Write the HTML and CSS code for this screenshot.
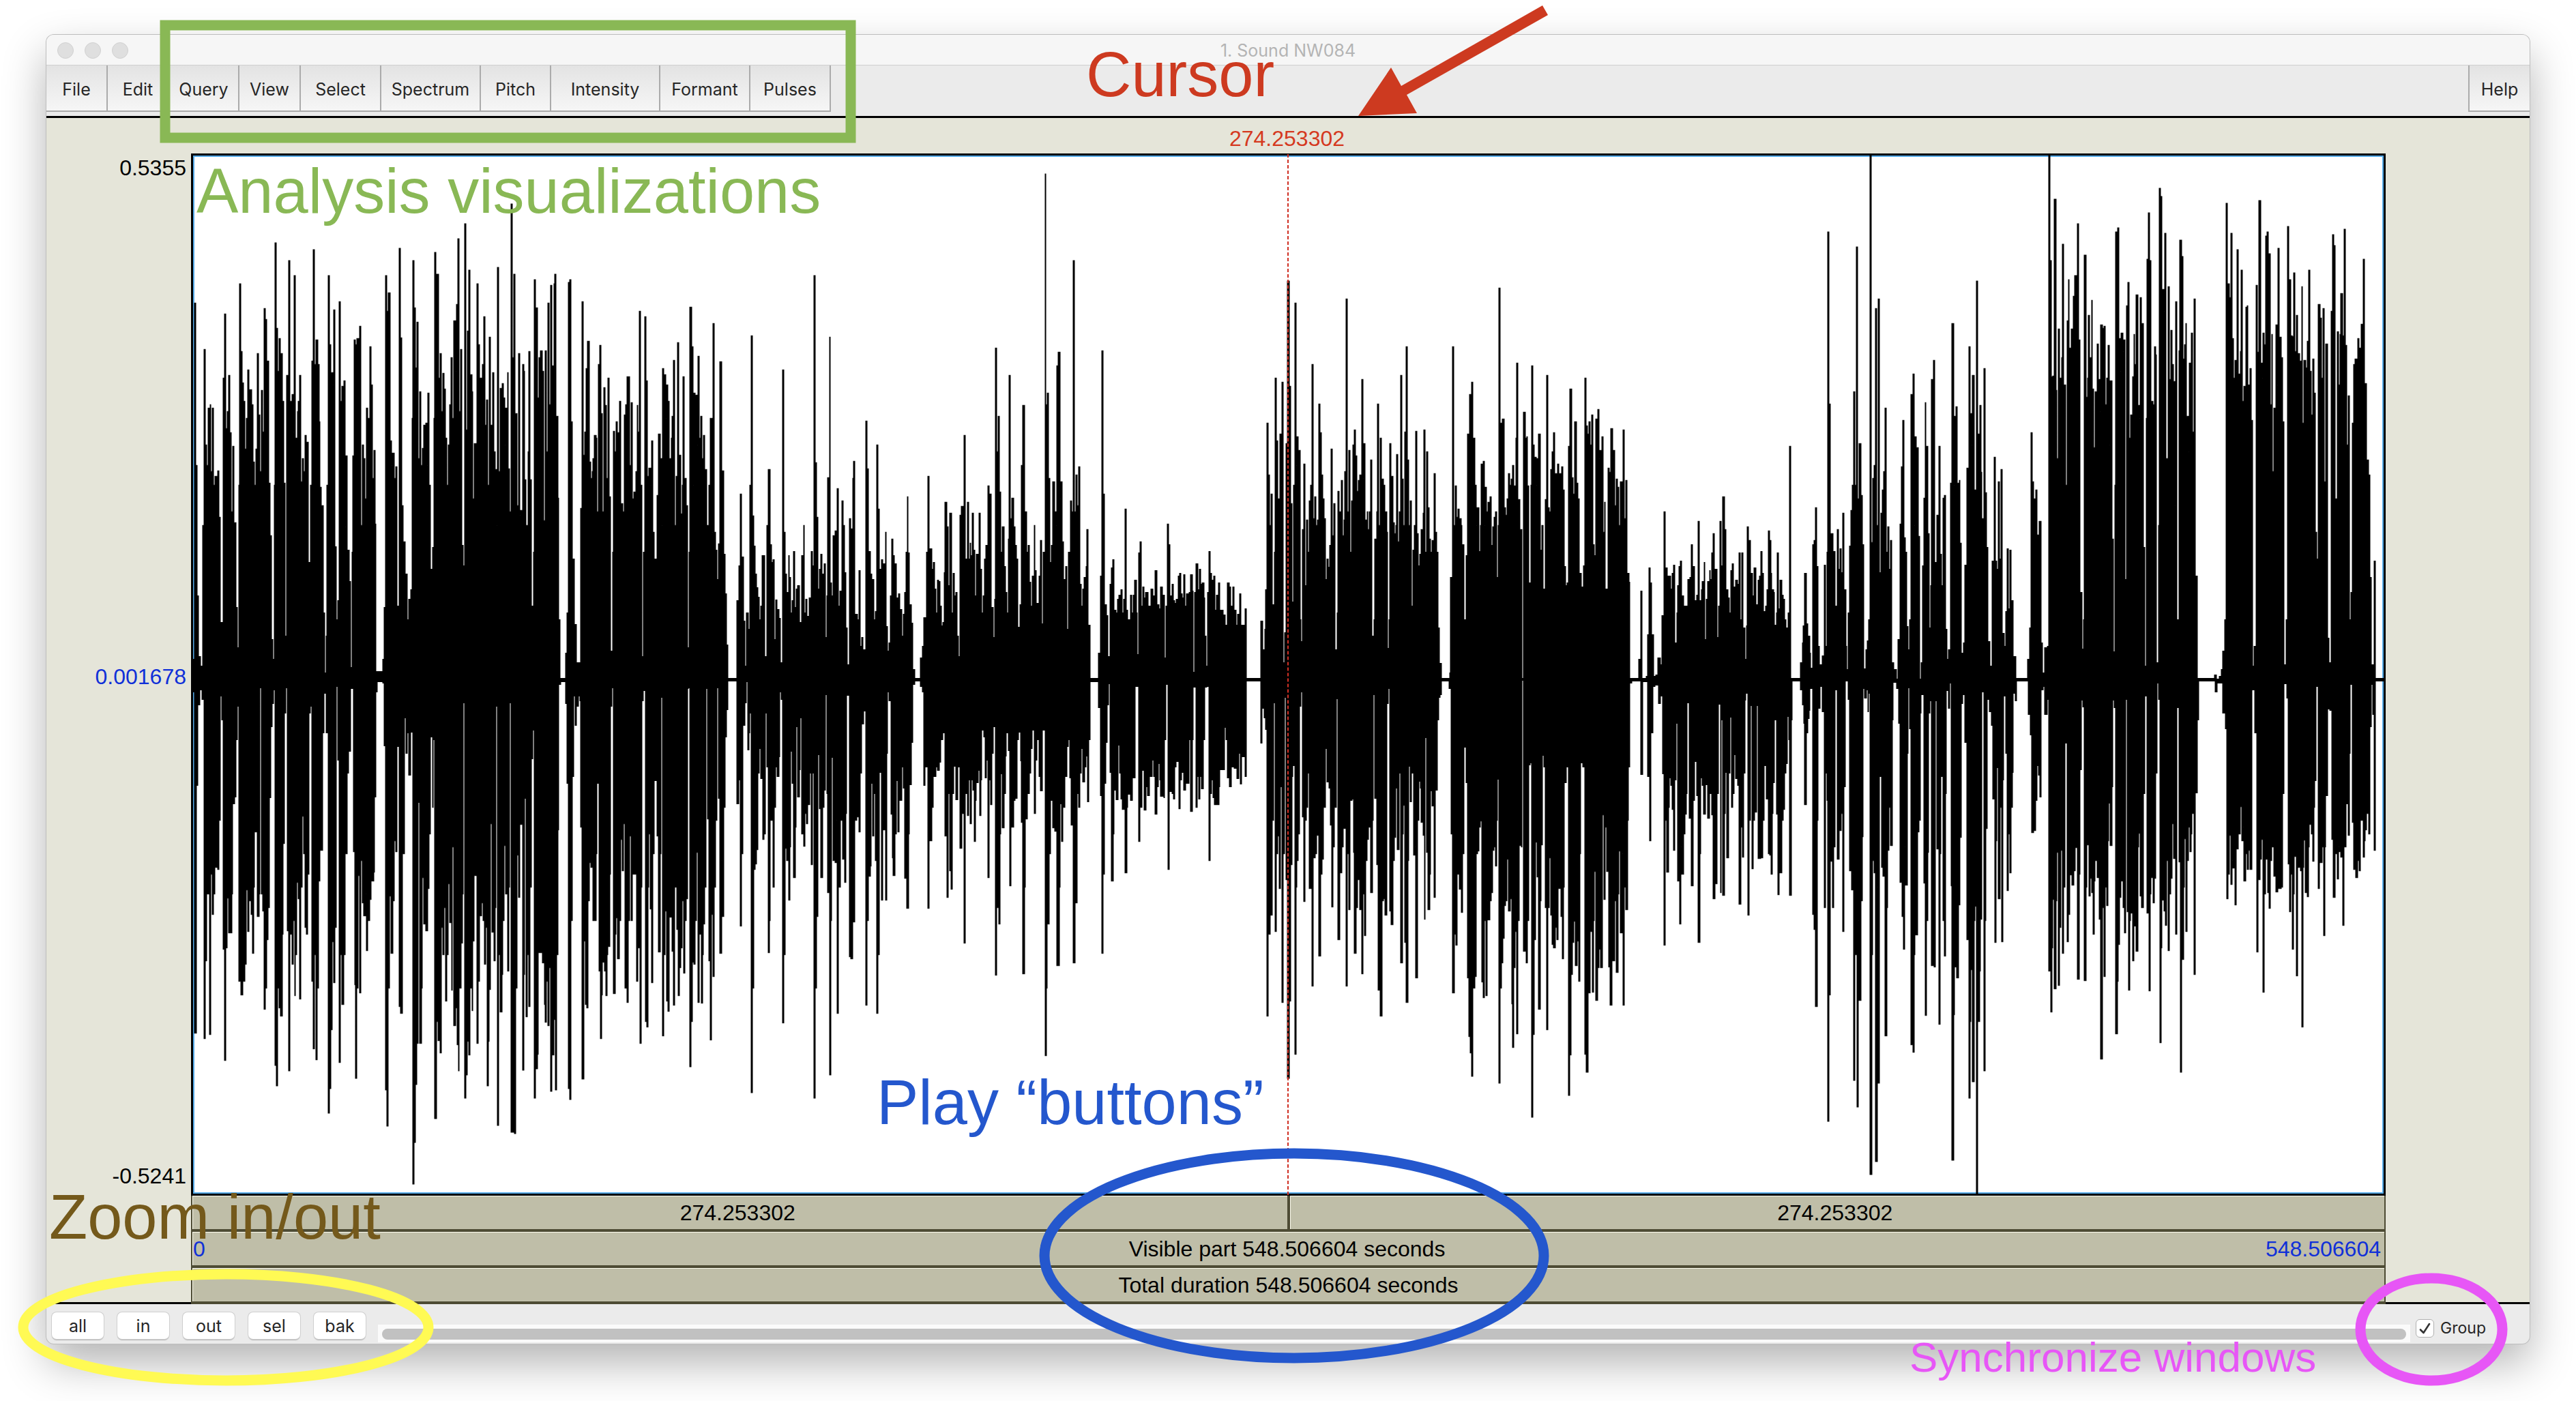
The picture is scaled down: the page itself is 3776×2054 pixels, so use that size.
FILE: index.html
```html
<!DOCTYPE html>
<html lang="en">
<head>
<meta charset="utf-8">
<title>1. Sound NW084</title>
<link rel="stylesheet" href="styles.css">
</head>
<body>
<main class="window">
  <header class="titlebar">
    <div class="lights"><i class="light"></i><i class="light"></i><i class="light"></i></div>
    <h1 class="title">1. Sound NW084</h1>
  </header>
  <nav class="menubar">
    <button class="menu w-s">File</button>
    <button class="menu w-s">Edit</button>
    <button class="menu w-m">Query</button>
    <button class="menu w-s">View</button>
    <button class="menu w-l">Select</button>
    <button class="menu w-xxl">Spectrum</button>
    <button class="menu w-m">Pitch</button>
    <button class="menu w-max">Intensity</button>
    <button class="menu w-xl">Formant</button>
    <button class="menu w-l">Pulses</button>
    <button class="menu menu-help">Help</button>
  </nav>
  <section class="editor">
    <div class="scale">
      <span>0.5355</span>
      <span class="blue scale-mid">0.001678</span>
      <span class="scale-low">-0.5241</span>
    </div>
    <div class="cursor-time">274.253302</div>
    <div class="plot">
      <svg class="wave" viewBox="280 225 3217 1527" preserveAspectRatio="none" aria-label="Waveform">
        <g id="wave" class="peaks"></g>
        <path class="cursor-line" d="M1888 226V1751"/>
      </svg>
    </div>
    <div class="bars">
      <div class="bar-row">
        <button class="bar bar-half">274.253302</button>
        <button class="bar bar-half">274.253302</button>
      </div>
      <button class="bar bar-ends"><span class="blue">0</span><span>Visible part 548.506604 seconds</span><span class="blue end">548.506604</span></button>
      <button class="bar">Total duration 548.506604 seconds</button>
    </div>
    <div class="margin"></div>
  </section>
  <footer class="footer">
    <div class="zooms">
      <button class="zoom">all</button>
      <button class="zoom">in</button>
      <button class="zoom">out</button>
      <button class="zoom">sel</button>
      <button class="zoom">bak</button>
    </div>
    <div class="track"><div class="thumb"></div></div>
    <label class="group"><input class="check" type="checkbox" checked>Group</label>
  </footer>
</main>
<div class="notes">
  <svg class="shapes" viewBox="0 0 3776 2054" preserveAspectRatio="none" aria-hidden="true">
    <rect class="ring green" x="242" y="37" width="1005" height="165"/>
    <ellipse class="ring royal" cx="1897" cy="1841" rx="366" ry="150"/>
    <ellipse class="ring yellow" cx="331" cy="1946" rx="297" ry="78"/>
    <ellipse class="ring pink" cx="3564" cy="1949" rx="104" ry="75"/>
    <path class="arrow" d="M1991 170L2039 99L2054 126L2261 8L2269 22L2062 139L2077 166Z"/>
  </svg>
  <p class="note note-analysis">Analysis visualizations</p>
  <p class="note note-cursor">Cursor</p>
  <p class="note note-play">Play “buttons”</p>
  <p class="note note-zoom">Zoom in/out</p>
  <p class="note note-sync">Synchronize windows</p>
</div>
<script src="wave.js"></script>
</body>
</html>
```
FILE: styles.css
```css
* { box-sizing: border-box; }
body {
  margin: 0;
  min-height: 100vh;
  padding: 51px 68px 84px;
  display: flex;
  position: relative;
  background: #fff;
  color: #000;
  font-family: "Liberation Sans", Arial, sans-serif;
  overflow-x: hidden;
}
button { font: inherit; color: inherit; margin: 0; }
.window {
  flex: 1;
  display: flex;
  flex-direction: column;
  border-radius: 11px;
  overflow: hidden;
  background: #ebebeb;
  box-shadow: 0 0 0 1px #bdbdbd, 0 28px 64px rgba(0, 0, 0, .3);
}
.titlebar {
  height: 45px;
  display: grid;
  grid-template-columns: 1fr auto 1fr;
  align-items: center;
  padding-top: 2px;
  background: #f6f6f6;
  border-bottom: 1px solid #cfcfcf;
}
.lights { display: flex; gap: 16px; padding-left: 16px; }
.light { width: 24px; height: 24px; border-radius: 50%; background: #dfdfdf; border: 1px solid #d0d0d0; }
.title { margin: 0; font: 400 25px/32px Inter, sans-serif; color: #b4b4b4; }
.menubar { height: 74px; display: flex; align-items: flex-start; font: 25px Inter, sans-serif; color: #262626; }
.menu {
  height: 68px;
  padding: 4px 0 0;
  border: 0 solid #ababab;
  border-width: 0 2px 2px 0;
  background: linear-gradient(#e3e3e3, #f6f6f6);
}
.w-s { width: 90px; }
.w-m { width: 103px; }
.w-l { width: 118px; }
.w-xl { width: 132px; }
.w-xxl { width: 146px; }
.w-max { width: 160px; }
.menu-help { width: 90px; margin-left: auto; border-width: 0 0 2px 2px; }
.editor {
  flex: 1;
  display: grid;
  grid-template-columns: 212px 1fr 211px;
  grid-template-rows: 52px 1fr auto;
  border-top: 3px solid #000;
  background: #e5e5d9;
  font-size: 32px;
  line-height: 36px;
}
.scale {
  grid-column: 1;
  grid-row: 1 / 4;
  display: grid;
  grid-template-rows: auto 51fr auto 50fr auto;
  justify-items: end;
  padding: 55px 7px 167px 0;
  border-bottom: 3px solid #000;
}
.scale-mid { grid-row: 3; }
.scale-low { grid-row: 5; }
.blue { color: #1030d8; }
.cursor-time { grid-column: 2; grid-row: 1; padding: 12px 4px 0 0; text-align: center; color: #d5391f; }
.plot { grid-column: 2; grid-row: 2; position: relative; background: #fff; border: 3px solid #000; box-shadow: inset 0 0 0 2px #55aae8; }
.wave { position: absolute; left: -3px; top: -3px; width: calc(100% + 6px); height: calc(100% + 6px); }
.peaks { fill: #000; stroke: #000; stroke-width: 1; }
.cursor-line { stroke: #d03024; stroke-width: 2; stroke-dasharray: 5 3; fill: none; }
.bars { grid-column: 2; grid-row: 3; }
.bar-row { display: grid; grid-template-columns: 1fr 1fr; }
.bar {
  display: block;
  width: 100%;
  height: 53px;
  padding: 0;
  border: 0 solid #4d4b34;
  border-width: 0 2px 4px;
  background: #bfbea8;
  box-shadow: inset 1px 1px #fffff0;
}
.bar-half { padding-right: 6px; }
.bar-ends { display: grid; grid-template-columns: 1fr auto 1fr; align-items: center; text-align: left; padding: 0 5px 0 1px; }
.end { text-align: right; }
.margin { grid-column: 3; grid-row: 1 / 4; border-bottom: 3px solid #000; }
.footer { height: 58px; display: flex; align-items: flex-start; font: 25px Inter, sans-serif; color: #262626; }
.zooms { display: flex; gap: 20px; padding: 12px 0 0 8px; }
.zoom {
  width: 76px;
  height: 39px;
  padding: 0;
  border: 0;
  border-radius: 7px;
  background: #fff;
  box-shadow: 0 0 0 1px #cfcfcf, 0 2px 1px #b4b4b4;
}
.track { flex: 1; height: 26px; margin: 30px 8px 0 18px; padding: 6px; background: #fafafa; }
.thumb { height: 16px; border-radius: 8px; background: #c1c1c1; }
.group { display: flex; align-items: center; gap: 9px; margin-top: 20px; padding-right: 64px; font-size: 23px; line-height: 30px; }
.check {
  appearance: none;
  width: 27px;
  height: 27px;
  margin: 0;
  border: 1px solid #b0b0b0;
  border-radius: 6px;
  background: #fff url("data:image/svg+xml,%3Csvg xmlns='http://www.w3.org/2000/svg' viewBox='0 0 25 25'%3E%3Cpath d='M6 14.500L10.500 19L19 6' fill='none' stroke='%23333' stroke-width='2.600' stroke-linecap='round' stroke-linejoin='round'/%3E%3C/svg%3E");
}
.notes { position: absolute; inset: 0; pointer-events: none; overflow: hidden; }
.shapes { position: absolute; left: 0; top: 0; width: 100%; height: 100%; }
.ring { fill: none; stroke-width: 15; }
.green { stroke: #89b855; }
.royal { stroke: #2457cd; }
.yellow { stroke: #fffa54; }
.pink { stroke: #e756f6; }
.arrow { fill: #cd3a20; }
.note { position: absolute; margin: 0; font-size: 92px; line-height: 104px; white-space: nowrap; }
.note-analysis { left: 288px; top: 228px; color: #89b855; }
.note-cursor { left: 1592px; top: 57px; color: #cd3a20; }
.note-play { left: 1285px; top: 1564px; color: #2457cd; }
.note-zoom { left: 72px; top: 1732px; color: #74591b; }
.note-sync { left: 2799px; top: 1955px; font-size: 62px; line-height: 70px; color: #e756f6; }
```
FILE: wave.js
```js
// Peak envelopes, stored in four blocks. Each list holds "x y" pairs: from x onward the
// envelope stays at y until the next pair. One unit is 15/28 px across and 55/56 px down.
const ZERO = 790;
const blocks = [
  {
    left: 270, end: 1512,
    up: `16 770 23 760 28 228 31 470 35 665 39 755 44 770 50 560 54 297 58 440 62 470 65 385 70 380 73 480 77 385 80 500 84 487 91 479 95 548 99 705 106 340 110 244 114 415 117 390 121 336 125 422 129 540 133 442 137 556 141 682 146 742 149 500 151 200 155 300 159 347 163 375 166 446 170 400 174 328 178 357 185 380 189 465 193 500 196 446 200 303 203 395 207 480 211 358 215 420 218 236 222 253 226 315 231 497 235 575 239 730 243 760 246 500 248 138 252 266 256 330 260 281 264 303 268 375 272 497 276 725 280 336 286 165 290 375 294 365 298 420 301 187 305 430 309 390 312 375 316 336 319 495 323 460 327 480 331 426 335 436 339 615 343 732 346 500 349 315 353 149 357 320 361 283 365 320 369 405 372 503 376 530 380 690 384 780 389 725 391 500 394 187 398 290 402 332 406 350 409 238 413 592 417 700 420 672 424 226 427 375 431 352 436 344 440 562 443 456 447 597 451 643 455 772 459 600 461 456 465 283 469 290 473 281 477 370 480 263 484 560 487 440 491 460 495 520 499 385 503 400 507 293 511 350 515 490 518 448 522 558 525 778 543 760 546 682 551 187 555 240 559 213 563 434 567 470 570 452 574 490 578 472 582 680 588 147 592 280 596 530 600 584 604 670 607 632 611 700 614 670 619 656 623 400 625 165 629 235 633 325 637 257 641 460 644 360 648 470 652 445 656 410 660 407 664 470 667 362 670 500 674 625 679 593 683 400 685 153 689 185 696 340 700 303 704 390 707 333 711 356 715 430 719 500 723 440 726 380 730 310 734 400 738 255 742 330 745 230 749 132 753 390 756 297 760 590 763 620 767 110 771 417 775 270 779 179 783 335 787 360 790 520 794 438 798 640 801 200 805 290 809 340 815 320 820 248 823 410 827 373 831 500 835 279 839 410 843 332 847 450 851 477 855 560 857 175 861 480 865 355 869 348 873 370 877 440 880 385 884 332 887 475 891 540 894 80 898 310 902 185 906 393 910 530 914 303 918 545 921 538 925 320 929 330 932 492 936 560 940 450 943 300 947 492 951 680 955 600 958 193 962 235 966 370 970 310 974 299 980 330 984 553 988 299 991 450 995 228 999 380 1003 202 1007 322 1011 200 1014 185 1018 397 1022 519 1025 700 1028 788 1043 750 1047 690 1051 198 1055 193 1059 405 1063 610 1067 740 1070 708 1073 765 1082 765 1085 535 1088 226 1092 455 1096 420 1100 326 1104 285 1108 465 1112 490 1116 480 1119 460 1122 426 1127 430 1130 540 1133 320 1137 291 1141 393 1145 540 1148 354 1152 381 1156 490 1159 340 1163 517 1167 747 1172 600 1174 419 1178 450 1182 405 1186 422 1190 375 1194 527 1200 540 1204 395 1208 380 1212 338 1218 470 1223 377 1227 520 1230 510 1236 480 1239 381 1242 420 1245 240 1249 500 1253 755 1257 600 1260 248 1264 344 1268 487 1272 474 1276 500 1279 434 1283 570 1287 610 1291 670 1294 515 1298 424 1302 460 1306 560 1309 326 1313 335 1317 400 1320 350 1324 375 1328 460 1333 430 1335 397 1339 314 1343 560 1346 487 1350 287 1354 455 1358 543 1362 500 1365 338 1369 490 1373 530 1377 742 1381 600 1383 234 1388 293 1392 500 1395 362 1399 366 1403 440 1406 307 1410 430 1413 397 1417 460 1421 426 1425 477 1429 590 1432 560 1436 500 1440 400 1444 570 1447 259 1450 570 1454 597 1458 640 1462 587 1466 316 1470 620 1473 479 1477 603 1480 662 1484 738 1488 788`,
    down: `16 800 20 838 23 808 28 1318 33 948 38 828 43 805 48 820 52 810 54 1326 58 1210 62 1110 69 1320 73 1080 77 1140 80 1110 84 1070 89 820 92 1073 96 1000 99 815 103 850 107 1192 110 1358 114 1190 118 1116 122 1168 130 1110 133 975 138 965 141 880 145 830 150 1240 155 1260 160 1240 166 1215 170 1104 174 1166 178 1120 182 1140 186 1198 190 1100 193 1017 200 1143 205 1110 207 802 211 1110 215 1135 219 1282 223 1250 226 1178 230 1130 233 966 237 860 241 826 245 805 248 1365 252 1396 256 1250 260 1280 264 1292 268 1170 270 1034 275 840 278 802 282 1165 286 1374 290 1170 294 1215 298 1150 302 1262 305 1200 308 1092 312 1117 316 1267 320 1100 323 994 327 1050 331 1160 335 1170 338 1080 342 840 346 830 349 1240 353 1341 357 1200 360 1357 364 1250 367 1090 371 1045 378 870 382 810 388 870 394 1437 398 1400 401 1312 405 1181 409 1242 413 1160 416 800 420 910 424 1361 428 1200 431 1275 437 1200 440 1050 446 930 450 897 455 803 462 1047 466 1245 469 1385 473 1250 476 1082 480 1257 484 1060 487 1123 491 1142 496 1110 499 1194 503 1150 507 1118 511 1090 518 1077 521 965 525 808 529 793 543 795 547 889 551 1402 555 1456 559 1250 562 1113 566 1198 571 1120 575 1030 578 1047 582 890 588 1278 592 1288 597 1050 602 847 607 900 611 870 614 933 619 868 625 1543 629 1480 633 1394 637 1333 641 973 644 1333 650 1250 652 1085 656 1155 660 1165 666 1102 670 1020 674 876 679 980 682 880 685 1445 690 1300 694 1329 700 1347 704 1160 707 1200 711 1130 715 1270 719 1200 723 1095 727 1153 731 1253 734 1040 738 1306 742 1280 746 1335 750 1374 753 1250 757 1183 761 1110 763 825 767 1414 771 1380 775 1330 779 1350 783 1250 787 1284 790 1180 793 1082 798 822 801 1333 805 1240 809 1142 813 1123 817 1150 821 1215 825 1160 828 1396 832 1330 835 1252 838 1005 842 1167 847 1210 851 1130 853 830 857 1455 861 1200 865 1286 869 1230 872 1150 875 1038 879 1110 884 1225 888 1100 890 825 894 1465 903 1467 907 1250 910 1052 914 1115 918 920 921 1006 925 1372 929 1230 931 967 935 1293 939 1200 943 1278 947 1100 950 908 954 865 958 1414 962 1370 966 1349 969 1197 980 1213 985 1275 988 1301 992 1240 995 1306 999 1220 1003 1404 1007 1350 1011 1297 1015 1402 1019 1200 1022 1014 1025 797 1030 793 1043 826 1047 945 1051 1400 1055 1416 1059 1150 1062 935 1066 815 1070 858 1074 830 1078 815 1082 822 1085 1010 1089 1386 1093 1180 1097 1275 1101 1280 1105 1120 1108 1063 1112 1070 1118 1150 1128 1050 1130 945 1134 1225 1138 1326 1142 1260 1145 1212 1149 1225 1153 1262 1157 1200 1160 1188 1164 1080 1167 830 1171 802 1175 1258 1179 1170 1182 1145 1186 1207 1190 1150 1194 1028 1198 1075 1202 1005 1205 1250 1209 1180 1212 1272 1216 1150 1219 1023 1223 1150 1227 1080 1238 1240 1242 1190 1246 1333 1250 1100 1253 822 1257 806 1261 1300 1265 1308 1269 1100 1271 1020 1275 1132 1279 1242 1283 1050 1287 941 1291 810 1294 1023 1298 1196 1302 1050 1305 817 1309 1322 1313 1200 1316 1135 1320 1270 1324 1285 1328 1144 1334 1195 1339 1276 1343 1100 1347 1163 1351 1262 1355 1220 1358 1190 1362 1120 1366 1228 1370 1150 1373 1117 1377 803 1380 802 1383 1367 1387 1300 1390 1212 1395 1215 1399 1150 1402 1048 1406 1272 1410 1170 1414 1273 1418 1200 1421 1155 1425 1100 1428 803 1432 998 1436 1210 1440 1328 1443 1140 1447 1233 1451 1100 1454 1000 1458 802 1462 967 1466 1198 1470 1060 1473 1143 1477 980 1480 876 1484 835 1488 792`
  },
  {
    left: 1080, end: 1512,
    up: `0 672 5 620 9 513 13 607 18 703 22 770 27 690 31 715 36 500 39 277 43 546 47 591 50 632 54 653 58 667 62 700 65 680 69 605 77 755 82 560 85 477 91 588 95 615 99 611 103 730 106 671 110 685 116 698 120 765 125 328 129 570 133 632 137 660 141 605 144 637 148 690 151 672 155 599 159 682 163 655 167 650 171 733 174 705 178 605 182 560 185 690 189 670 193 695 197 668 201 710 204 599 208 620 211 187 215 466 219 548 223 655 226 625 230 603 234 632 238 617 242 727 246 665 249 489 253 279 256 646 260 665 264 575 268 568 272 650 275 505 278 680 282 658 287 523 291 560 294 630 298 713 302 768 308 550 312 565 317 490 320 464 323 692 330 700 334 627 338 740 342 727 346 745 350 770 353 404 357 475 361 599 365 632 369 665 372 640 376 700 379 688 383 440 387 536 391 625 395 611 399 655 402 617 406 570 409 711 413 747 417 735 420 665 424 580 428 605 432 617 436 690 439 668 443 662 447 685 451 725 455 692 459 660 463 600 466 517 469 601 473 678 477 706 481 775 487 788 503 758 508 740 511 697 518 600 522 487 526 600 529 595 533 625 537 615 541 655 545 690 549 641 553 643 556 680 560 710 564 705 567 630 570 525 574 562 578 650 582 542 588 690 592 631 596 665 599 660 603 725 607 755 611 545 615 531 619 620 622 426 626 610 630 525 634 610 638 586 641 605 644 542 648 597 652 665 656 603 660 610 663 542 667 625 671 690 674 665 678 610 682 590 686 501 690 600 693 513 697 682 701 727 705 670 708 295 712 450 715 397 719 510 723 600 727 562 731 621 735 660 739 690 742 580 745 336 749 550 752 519 757 562 761 590 765 610 769 712 775 678 779 470 783 381 787 615 790 540 793 600 797 590 801 645 805 680 809 635 813 560 816 627 820 676 827 635 831 582 835 707 839 600 843 36 846 380 849 362 853 490 857 615 861 590 865 495 869 540 873 560 876 322 880 301 884 520 887 495 891 584 895 640 899 621 903 715 908 600 913 523 917 540 920 165 924 540 928 485 932 530 935 472 939 648 943 680 947 655 951 637 955 621 958 566 962 709 966 788 990 750 995 635 999 299 1003 513 1007 678 1011 694 1015 755 1021 648 1025 623 1029 611 1033 686 1037 690 1041 670 1045 664 1051 656 1055 690 1059 670 1062 536 1066 686 1070 700 1077 664 1081 690 1085 664 1089 641 1093 690 1095 752 1100 601 1103 584 1107 680 1111 652 1115 668 1119 660 1125 680 1133 655 1139 665 1145 627 1149 700 1152 678 1156 684 1160 652 1164 690 1167 664 1171 758 1175 680 1178 558 1182 589 1186 665 1190 648 1194 672 1198 676 1203 670 1207 635 1211 631 1215 662 1219 668 1223 633 1227 680 1231 662 1238 660 1242 633 1246 658 1249 779 1253 660 1257 617 1261 656 1265 625 1269 648 1273 646 1278 668 1281 725 1284 770 1288 660 1291 599 1295 631 1299 641 1305 635 1309 686 1313 664 1317 646 1321 686 1330 693 1336 709 1343 646 1347 652 1351 680 1357 652 1361 686 1366 709 1370 692 1373 707 1376 662 1380 709 1388 711 1391 684 1394 788 1433 703 1440 745 1444 715 1447 656 1450 407 1454 485 1458 560 1462 513 1466 678 1470 600 1473 340 1477 434 1481 520 1485 424 1489 500 1491 346 1495 765 1499 720 1503 438 1507 195`,
    down: `0 975 5 940 9 1158 13 1050 17 858 22 825 26 793 29 895 34 870 36 840 39 1406 43 1250 46 1073 51 1065 55 1044 58 930 62 893 66 938 70 1028 75 1020 78 840 82 920 85 1197 89 1150 92 1000 99 1100 103 980 106 920 110 935 116 905 118 808 122 820 125 1302 129 1200 133 1042 137 1060 141 1119 145 1040 148 897 151 945 155 1085 160 1010 163 860 167 965 171 925 174 847 178 1020 182 1039 186 990 190 1005 195 976 200 930 203 1066 207 930 211 1414 215 1250 218 1143 222 902 226 983 230 1085 235 980 238 955 242 812 246 960 249 1108 253 1380 257 1150 260 906 264 1060 269 1063 273 1000 275 1288 279 1100 283 1000 290 1058 294 1093 298 990 301 814 308 1203 312 1207 317 1100 320 1152 323 1000 328 995 334 1017 338 930 342 856 348 837 353 1276 357 1150 361 1083 365 1068 368 945 372 1023 376 960 379 1060 383 1288 387 1200 390 929 395 1119 399 1000 402 1014 406 1119 411 900 413 808 417 822 421 991 425 1056 428 1082 433 1020 436 941 440 1017 444 950 447 970 451 920 455 952 459 1086 465 1131 470 1020 473 947 477 884 481 797 487 792 503 800 507 808 511 948 515 920 522 1131 526 960 529 1030 533 980 537 935 545 920 549 926 554 913 558 880 563 870 570 1023 574 1115 578 960 582 1075 586 1103 590 960 593 919 597 905 600 969 604 920 608 880 611 1042 616 990 619 906 622 1183 626 960 630 993 634 940 638 1005 642 940 645 955 649 1031 654 970 656 944 660 926 664 993 668 940 671 865 675 876 679 937 684 910 686 1085 690 940 694 976 698 900 701 860 707 1231 712 1130 716 1155 720 1020 723 931 727 1011 732 960 735 904 738 870 742 896 746 1098 750 980 753 1010 757 970 761 967 767 880 771 869 776 911 779 1003 783 1229 787 1100 790 998 795 960 801 930 805 893 809 865 813 990 818 910 821 880 827 935 831 956 836 865 843 1351 847 1250 850 1155 855 1050 858 970 865 1011 869 1016 873 930 876 1217 882 1100 884 975 888 1031 893 980 897 935 903 890 907 880 911 937 914 1007 918 900 921 1213 925 1050 928 1123 932 960 935 980 939 930 943 893 947 943 952 920 956 904 959 972 963 880 966 793 990 832 995 963 999 1198 1003 1080 1006 945 1010 884 1014 828 1017 796 1021 929 1025 1090 1030 1020 1033 955 1037 969 1043 888 1047 930 1051 968 1055 984 1060 930 1063 1078 1067 980 1070 961 1077 970 1083 937 1090 800 1099 1031 1104 980 1108 926 1115 985 1120 950 1124 963 1130 935 1137 910 1141 935 1145 991 1149 950 1153 915 1157 940 1160 964 1168 966 1171 880 1174 797 1179 1073 1184 957 1190 960 1194 968 1198 920 1202 912 1209 983 1214 940 1217 929 1222 955 1229 945 1237 880 1242 987 1246 880 1249 801 1256 981 1260 935 1264 968 1268 935 1272 953 1277 880 1281 801 1287 800 1291 1060 1295 960 1299 940 1303 966 1307 976 1315 976 1319 950 1322 925 1330 925 1334 861 1338 880 1342 937 1347 950 1353 920 1361 922 1366 865 1369 938 1373 900 1377 946 1381 905 1388 880 1391 935 1394 792 1434 885 1438 833 1443 847 1447 864 1450 1292 1455 1170 1459 1032 1462 1141 1466 1000 1469 825 1473 1166 1477 1050 1480 1023 1484 1102 1488 950 1491 1272 1496 1050 1499 817 1503 1088 1507 1385`
  },
  {
    left: 1890, end: 1493,
    up: `0 352 3 527 7 674 11 500 14 228 18 470 21 428 25 448 29 700 32 733 35 566 39 468 43 650 47 552 51 600 54 523 58 500 62 320 65 550 69 517 73 560 77 552 80 379 84 422 88 485 92 520 96 550 99 640 103 610 106 622 110 590 114 446 118 575 122 527 125 745 130 690 133 509 137 540 141 493 145 575 149 552 152 480 155 222 159 540 162 448 166 600 169 523 173 440 178 417 181 456 185 509 189 493 193 485 197 342 201 490 204 438 208 552 212 540 215 566 219 540 222 462 226 725 231 700 234 580 238 540 241 379 245 560 248 430 252 491 257 500 262 540 266 570 269 743 273 700 275 438 279 487 283 556 287 572 291 560 293 454 297 584 301 540 304 336 308 491 312 560 315 420 319 293 323 462 327 560 330 523 334 680 338 597 342 560 345 419 349 572 353 620 357 603 361 566 365 542 368 417 372 600 375 450 379 534 383 580 387 600 391 582 395 483 399 570 403 600 406 713 410 766 416 788 438 780 441 637 446 293 450 560 453 501 457 548 461 536 465 550 470 560 473 588 477 715 480 701 483 605 487 424 493 365 498 346 502 430 508 500 512 560 514 534 518 599 522 560 525 468 530 464 533 560 536 503 540 540 544 525 548 517 552 590 556 562 560 548 563 540 567 637 571 560 573 206 577 407 583 401 588 534 592 545 596 520 599 483 603 500 607 491 611 470 615 501 619 430 622 318 626 521 631 566 637 788 640 391 645 430 649 428 652 501 656 646 660 500 663 322 667 440 671 458 675 500 678 460 682 424 686 597 690 560 694 655 700 521 704 336 707 534 711 540 715 477 719 450 722 422 726 483 734 468 738 483 745 472 749 507 753 621 756 650 760 646 764 442 768 356 772 489 777 513 781 405 785 497 789 520 793 631 799 652 804 620 808 340 812 411 816 424 820 405 824 440 827 395 831 588 835 605 838 401 843 387 847 460 850 448 854 428 858 570 862 525 865 655 871 474 876 481 880 415 884 458 887 448 891 530 894 491 898 503 902 560 906 495 910 545 913 417 917 550 920 493 924 631 929 645 932 788 956 760 961 658 965 788 976 785 980 723 984 623 988 646 992 723 996 785 1002 783 1008 758 1015 768 1020 694 1025 540 1029 623 1035 635 1043 655 1048 631 1051 619 1054 735 1060 690 1063 650 1066 621 1070 613 1074 665 1078 690 1081 680 1088 705 1091 640 1095 637 1100 589 1104 621 1108 672 1114 664 1118 554 1122 672 1127 656 1130 643 1134 615 1137 730 1141 670 1145 643 1149 627 1152 640 1156 601 1159 572 1163 625 1168 625 1171 727 1175 680 1178 554 1182 620 1186 517 1190 566 1194 656 1200 668 1204 690 1208 627 1212 617 1216 652 1220 641 1226 648 1230 601 1234 700 1238 601 1242 713 1246 760 1250 710 1253 562 1257 582 1261 670 1264 631 1268 665 1272 623 1276 678 1280 690 1283 641 1287 635 1290 599 1294 631 1298 688 1302 680 1306 656 1310 568 1314 582 1317 631 1320 656 1325 660 1328 709 1332 690 1335 601 1339 684 1343 641 1347 664 1352 670 1355 700 1359 713 1365 690 1368 442 1372 788 1398 765 1403 735 1406 710 1410 631 1414 707 1419 725 1424 750 1427 773 1431 589 1436 582 1440 534 1443 621 1447 740 1451 768 1457 754 1463 619 1467 740 1471 600 1473 122 1477 379 1481 572 1488 599`,
    down: `0 1270 3 1066 7 935 10 918 14 1349 18 1100 21 1060 25 1020 28 830 32 808 36 995 39 1121 43 1000 46 981 50 930 54 1102 59 1070 62 1247 66 1056 71 1050 75 1022 80 1202 86 1080 90 1058 94 980 98 893 103 943 108 952 112 1007 115 1129 120 1040 124 980 128 819 133 1178 138 1078 143 1040 148 1012 155 1247 159 1050 163 1133 167 970 171 968 175 1048 178 1198 182 1130 187 1088 193 1133 197 1229 201 1110 205 1172 209 1060 212 1028 216 1010 220 1000 223 1108 227 1000 230 812 234 967 238 1066 242 1253 246 1100 249 1292 253 1120 258 1117 262 1141 266 826 270 803 275 1135 279 1156 284 1060 288 1025 292 952 295 1044 300 930 302 886 305 1213 309 1020 312 977 316 1182 320 1272 324 1060 327 919 331 972 335 930 339 1052 343 1040 346 1235 350 1000 354 942 358 952 361 1003 365 1022 369 1147 372 877 375 1048 379 1133 384 1080 387 956 391 978 395 1115 399 955 405 850 409 817 413 812 416 792 436 803 443 1020 447 1257 451 1170 455 1186 459 1080 465 1103 470 1137 474 1050 477 793 480 891 484 944 488 1235 491 1323 495 1347 499 1382 503 1250 508 1233 511 1050 515 1046 519 1010 522 1001 526 1241 530 1265 534 1150 537 1262 541 1120 544 1148 548 1120 552 1108 556 1045 560 1040 564 1068 567 1000 569 939 573 1392 577 1250 581 1213 585 1176 588 1127 592 1120 595 1058 599 1135 604 1117 608 1274 611 1339 615 1220 618 1166 622 1319 626 1150 629 1038 634 1040 637 791 640 1195 648 1213 652 1150 655 917 659 914 663 1443 667 1320 671 1178 674 1032 678 1084 682 1282 686 1120 688 1036 692 903 696 920 700 1130 704 1312 708 1130 712 1056 715 1141 719 1185 723 1190 728 1160 731 1178 735 1102 742 1143 746 1207 751 1100 753 944 757 914 760 920 764 1410 768 1350 771 1230 775 1182 779 1151 783 1217 787 1180 791 1240 795 1050 797 914 802 920 806 912 808 1349 812 1376 817 1257 824 1166 828 1256 832 1150 835 1076 839 1269 844 1220 848 1192 851 1220 857 992 861 1118 865 1010 868 1076 873 1219 877 1276 882 1210 890 1120 894 1227 899 1110 902 1046 906 1168 910 1050 913 1276 917 1100 921 1133 925 1000 928 920 931 795 937 792 961 932 966 793 980 935 985 1030 990 870 994 800 1000 795 1003 798 1010 826 1015 815 1021 931 1025 1186 1029 1000 1033 1077 1037 980 1040 937 1044 948 1048 984 1051 1045 1055 940 1058 855 1062 1090 1067 1155 1071 1040 1074 1080 1078 1020 1082 991 1086 960 1089 825 1093 997 1097 930 1100 1098 1105 970 1108 912 1112 896 1115 963 1119 1182 1123 1050 1126 937 1130 948 1133 991 1138 930 1141 947 1145 997 1150 960 1155 992 1160 1117 1165 1095 1170 960 1174 827 1179 1108 1182 850 1186 1112 1190 990 1193 929 1197 1056 1202 930 1205 846 1209 981 1213 960 1217 902 1221 938 1227 948 1231 1125 1235 1010 1239 1055 1243 930 1246 821 1249 810 1254 1141 1258 1000 1261 829 1265 1072 1269 1000 1273 988 1278 829 1283 1057 1290 1056 1296 1000 1300 918 1305 968 1310 1050 1314 1052 1317 1080 1321 990 1324 944 1328 850 1332 991 1336 1111 1340 990 1343 1078 1348 1000 1352 984 1356 930 1359 915 1362 845 1366 880 1369 1112 1373 850 1376 792 1398 805 1403 828 1407 855 1410 976 1414 870 1419 848 1422 836 1425 803 1432 1140 1436 1163 1440 1278 1444 1000 1447 833 1452 800 1458 838 1463 1130 1467 930 1470 970 1473 1449 1477 1260 1480 1061 1485 1130 1490 1040`
  },
  {
    left: 2690, end: 1504,
    up: `0 680 5 566 9 625 13 595 17 630 21 542 25 656 29 740 31 775 36 690 39 591 43 538 47 500 50 360 54 500 58 145 62 520 66 438 70 515 74 589 78 774 84 745 88 732 92 700 95 8 99 585 103 490 107 470 110 236 114 560 118 222 122 630 125 542 129 507 133 480 136 385 140 600 144 562 148 625 151 582 155 765 160 775 168 789 172 730 177 558 181 472 185 403 189 578 193 600 196 711 200 745 204 700 208 365 212 334 216 560 219 428 223 444 227 576 231 789 235 765 239 620 242 519 246 377 249 442 253 572 257 713 261 650 264 342 268 314 272 615 276 640 279 545 283 442 287 603 291 650 294 519 298 515 302 715 306 760 309 745 313 760 316 497 320 259 324 500 327 397 331 383 335 497 339 493 342 586 346 750 350 735 354 619 358 660 361 474 365 293 369 393 373 440 376 336 380 640 383 507 387 195 391 424 395 381 399 481 402 550 406 326 410 511 414 593 418 733 424 770 430 613 435 458 439 613 443 625 446 495 450 610 454 477 458 721 462 740 466 688 470 595 474 684 477 597 481 672 487 755 494 788 527 760 532 713 536 422 540 495 544 520 548 507 552 650 555 574 559 554 563 735 567 780 573 742 581 740 584 8 588 165 592 338 596 337 600 73 604 358 607 460 611 267 615 340 619 310 622 141 626 350 630 500 634 255 638 193 641 295 645 267 649 280 652 218 656 187 660 250 663 110 667 283 671 660 675 744 679 700 682 157 686 369 690 340 693 246 697 310 701 224 704 356 708 444 712 360 716 289 720 342 724 390 727 261 731 266 735 263 739 380 743 340 747 291 750 440 753 344 757 580 761 748 765 500 768 122 772 116 776 281 780 330 783 273 787 300 790 283 794 640 797 232 801 198 805 430 809 395 813 338 817 275 820 320 824 216 828 381 832 400 835 220 839 259 843 593 847 770 851 400 853 163 857 94 861 165 865 375 870 380 873 293 877 305 880 765 884 560 887 57 891 69 895 208 899 240 902 124 906 460 910 204 914 342 918 269 922 320 926 345 929 530 932 226 936 700 940 299 943 134 948 159 952 312 956 290 959 259 962 397 966 450 969 318 974 273 978 420 981 222 985 725 988 635 991 788 1038 783 1043 789 1050 785 1056 775 1061 747 1066 700 1070 79 1074 200 1078 220 1082 124 1086 281 1090 340 1093 314 1097 330 1100 149 1104 334 1108 300 1111 179 1115 375 1119 352 1123 234 1128 232 1130 350 1134 326 1138 403 1142 770 1147 740 1152 202 1156 301 1160 75 1164 318 1168 340 1171 273 1175 290 1178 128 1182 122 1186 155 1190 380 1194 275 1197 480 1201 385 1205 261 1209 350 1212 147 1216 279 1221 310 1224 405 1228 768 1234 700 1238 114 1242 193 1246 277 1251 278 1254 183 1258 300 1261 246 1265 650 1268 303 1272 315 1276 204 1279 407 1283 314 1288 325 1291 285 1295 179 1299 330 1303 395 1306 312 1310 362 1314 570 1318 610 1321 230 1327 250 1330 340 1335 236 1339 495 1343 289 1347 728 1352 765 1357 240 1361 126 1365 143 1369 520 1373 271 1377 350 1381 275 1384 214 1388 277 1392 118 1396 291 1400 440 1403 367 1407 700 1411 660 1414 407 1418 320 1423 312 1429 281 1433 310 1436 295 1440 260 1444 163 1448 460 1451 348 1455 462 1460 485 1463 637 1467 768 1474 613 1478 788`,
    down: `0 805 6 1058 11 1015 17 990 21 1166 25 950 28 792 35 820 39 1075 44 1104 49 1080 51 1388 55 1200 59 1427 63 1150 66 1269 70 1120 74 1024 77 803 81 818 85 805 89 838 92 810 96 1528 100 1200 103 1060 107 1078 111 1509 115 1100 118 1392 122 935 126 1070 130 1083 134 1080 137 1322 141 1130 144 1045 148 980 152 1038 156 850 159 794 168 803 174 855 178 1093 182 1143 186 1192 190 1040 193 1097 197 900 200 802 204 863 208 1335 212 1346 216 1200 219 1171 225 1017 230 1000 234 840 236 812 242 1094 246 1291 250 1150 253 1048 256 840 260 822 264 1217 270 1219 274 822 278 1043 283 1304 287 1050 290 935 294 1150 298 1202 302 960 305 806 309 833 313 795 317 1098 320 1507 324 1290 327 1219 332 1235 337 1126 341 1025 345 826 349 812 354 884 360 1178 365 1414 369 1300 372 1223 376 1390 380 1150 383 1128 387 1558 391 1300 395 1225 398 1147 401 808 406 1374 410 1150 413 1012 417 820 421 838 425 820 428 858 432 968 436 1182 440 1030 443 921 447 1117 451 980 455 1181 459 940 461 815 466 900 470 1105 474 1020 477 1078 481 980 485 929 488 810 492 822 496 792 528 842 533 873 537 1018 544 1015 549 970 552 918 556 933 560 965 564 805 569 800 573 842 580 820 585 1225 589 1286 593 1190 596 1118 600 1251 604 1120 607 1048 611 1246 615 1160 618 1045 622 1198 626 1100 629 885 634 1181 638 1140 642 1081 648 1097 653 1075 657 1041 663 1237 668 1080 670 925 674 821 678 831 682 1239 686 1100 689 1036 694 1113 698 1086 702 1108 705 1170 709 1090 712 1060 716 1085 720 1060 723 1147 727 1356 731 1130 735 1233 739 1100 742 1127 746 1030 749 974 753 1038 757 950 760 821 764 832 768 1319 772 1240 775 1185 779 1115 782 1090 787 1130 791 1168 795 820 798 1136 802 1253 806 1150 809 1138 813 1210 818 1158 824 1195 828 1040 831 1019 835 1113 839 1130 844 960 847 815 853 1138 858 1254 863 1110 865 1085 869 1123 873 1086 878 930 881 795 884 820 888 1332 892 1190 895 1119 899 1135 903 1157 907 1060 910 1194 915 1110 918 1086 922 1005 926 1057 930 1000 932 1170 936 832 940 1062 944 1376 948 1208 953 1100 955 1027 959 1166 963 1060 966 1010 970 1047 974 1020 977 990 981 1230 985 900 988 959 992 850 994 792 1040 808 1045 795 1061 840 1067 863 1071 1117 1075 1080 1078 1022 1082 1096 1086 1060 1089 1071 1093 1126 1098 1043 1104 1020 1108 979 1112 1030 1116 1010 1119 1090 1123 1050 1127 1073 1131 1045 1134 1073 1140 805 1148 870 1153 1196 1158 1088 1162 1058 1166 1028 1171 1256 1175 1110 1178 1058 1183 1108 1187 1131 1191 1060 1194 1040 1198 970 1201 1083 1205 1107 1212 1102 1220 1100 1225 960 1229 796 1235 818 1239 1065 1243 1136 1247 1080 1250 1192 1254 1110 1257 1054 1261 1232 1265 840 1268 1070 1273 1075 1276 1308 1280 1070 1283 1029 1287 1108 1292 1114 1296 1040 1298 1006 1303 1020 1306 1061 1310 980 1312 941 1316 800 1321 1102 1325 1050 1328 1063 1332 1040 1336 1172 1340 1040 1343 963 1347 834 1354 836 1358 1028 1362 1115 1368 1050 1373 1087 1377 1040 1380 1047 1384 1055 1388 1157 1392 1040 1398 975 1403 1022 1407 900 1410 797 1415 1003 1419 1073 1425 1085 1430 1060 1434 1075 1438 1000 1444 1055 1448 1030 1451 1014 1455 990 1460 1020 1464 860 1467 797 1471 842 1474 1045 1478 792`
  }
];

const group = document.getElementById("wave");
const toY = (y) => Math.round(220 + y * 55 / 56);

for (const block of blocks) {
  const toX = (x) => Math.round(block.left + x * 15 / 28);
  for (const list of [block.up, block.down]) {
    const n = list.trim().split(/\s+/).map(Number);
    let d = `M${toX(n[0])} ${toY(ZERO)}`;
    for (let i = 0; i < n.length; i += 2) d += `H${toX(n[i])}V${toY(n[i + 1])}`;
    d += `H${toX(block.end)}V${toY(ZERO)}Z`;
    const path = document.createElementNS("http://www.w3.org/2000/svg", "path");
    path.setAttribute("d", d);
    group.appendChild(path);
  }
}
```
